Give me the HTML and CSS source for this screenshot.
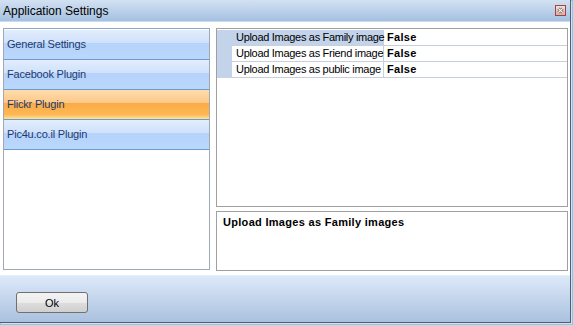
FILE: index.html
```html
<!DOCTYPE html>
<html lang="en">
<head>
    <meta charset="UTF-8">
    <title>Application Settings</title>
    <link rel="stylesheet" href="styles.css">
</head>
<body>
    <div class="window">
        <div class="frame">
            <div class="titlebar">
                <span class="title">Application Settings</span>
                <span class="close-btn">
                    <svg width="11" height="11" viewBox="0 0 11 11">
                        <defs>
                            <linearGradient id="cb" x1="0" y1="0" x2="0" y2="1">
                                <stop offset="0" stop-color="#f4e6e4"/>
                                <stop offset="1" stop-color="#d4aaa4"/>
                            </linearGradient>
                        </defs>
                        <rect x="0.5" y="0.5" width="10" height="10" fill="url(#cb)" stroke="#a3433a"/>
                        <path d="M3.3 3.3 L7.7 7.7 M7.7 3.3 L3.3 7.7" stroke="#6b5a5a" stroke-width="2.6"/>
                        <path d="M3.3 3.3 L7.7 7.7 M7.7 3.3 L3.3 7.7" stroke="#ffffff" stroke-width="1.2"/>
                    </svg>
                </span>
            </div>

            <div class="main">
                <div class="nav">
                    <div class="nav-item">General Settings</div>
                    <div class="nav-item">Facebook Plugin</div>
                    <div class="nav-item active">Flickr Plugin</div>
                    <div class="nav-item">Pic4u.co.il Plugin</div>
                </div>

                <div class="right">
                    <div class="prop-grid">
                        <div class="gutter"></div>
                        <div class="prop-name selected">Upload Images as Family image</div>
                        <div class="prop-value">False</div>

                        <div class="gutter"></div>
                        <div class="prop-name">Upload Images as Friend image</div>
                        <div class="prop-value">False</div>

                        <div class="gutter"></div>
                        <div class="prop-name">Upload Images as public image</div>
                        <div class="prop-value">False</div>
                    </div>
                    <div class="description">Upload Images as Family images</div>
                </div>
            </div>

            <div class="footer">
                <button class="btn">Ok</button>
            </div>
        </div>
    </div>
</body>
</html>
```

FILE: styles.css
```css
* {
    box-sizing: border-box;
}
body {
    margin: 0;
    font-family: "Liberation Sans", Arial, sans-serif;
    font-size: 11px;
    background: #ffffff;
}
.window {
    width: 573px;
    height: 325px;
    padding: 0 2px 2px 0;
    background: #6fd4ee;
}
.frame {
    height: 100%;
    display: flex;
    flex-direction: column;
    background: #ffffff;
    border-right: 1px solid #4f5e74;
    border-bottom: 1px solid #4f5e74;
    box-shadow: 1px 1px 0 #cfe3f3;
}
.titlebar {
    height: 22px;
    flex-shrink: 0;
    display: flex;
    align-items: center;
    justify-content: space-between;
    padding: 0 4px 0 3px;
    background: linear-gradient(#d3e1f2, #bcd1ea 50%, #a5c0e0);
    border-bottom: 1px solid #c9dbef;
}
.title {
    font-size: 12px;
    color: #000000;
    margin-top: 1px;
}
.close-btn {
    display: flex;
    width: 11px;
    height: 11px;
    margin-top: -1px;
}
.main {
    height: 253px;
    flex-shrink: 0;
    display: flex;
    gap: 6px;
    padding: 6px 2px 4px 3px;
}
.nav {
    width: 207px;
    height: 242px;
    border: 1px solid #a0a8b4;
    border-top-color: #8ea6c6;
    padding-top: 1px;
    background: #ffffff;
}
.nav-item {
    height: 30px;
    line-height: 29px;
    padding-left: 3px;
    color: #1d3b70;
    letter-spacing: -0.2px;
    border-bottom: 1px solid #6e9ad3;
    background: linear-gradient(#e2edfd, #cfe1fb 45%, #b5d3fb 46%, #bad7fc);
}
.nav-item.active {
    background: linear-gradient(#fedcab, #fcc889 45%, #fbab45 46%, #fcb855 85%, #fde594);
}
.right {
    width: 352px;
    display: flex;
    flex-direction: column;
    gap: 4px;
}
.prop-grid {
    height: 179px;
    border: 1px solid #a0a0a0;
    display: grid;
    grid-template-columns: 15px 152px 1fr;
    grid-auto-rows: 16px;
    align-content: start;
    padding-top: 1px;
}
.gutter {
    background: #c2d3ea;
}
.prop-name {
    padding-left: 4px;
    line-height: 15px;
    letter-spacing: -0.3px;
    white-space: nowrap;
    border-right: 1px solid #c5cfde;
    border-bottom: 1px solid #c5cfde;
}
.prop-name.selected {
    background: #c2d3ea;
}
.prop-value {
    padding-left: 3px;
    line-height: 15px;
    font-weight: bold;
    letter-spacing: 0.3px;
    border-bottom: 1px solid #c5cfde;
}
.description {
    height: 60px;
    border: 1px solid #a0a0a0;
    padding: 3px 6px;
    line-height: 14px;
    font-weight: bold;
    letter-spacing: 0.3px;
}
.footer {
    flex: 1;
    padding: 16px 0 0 16px;
    background: linear-gradient(#dde9f9, #c3d5ec 50%, #aac1de);
    border-top: 1px solid #e6f0fb;
}
.btn {
    width: 72px;
    height: 21px;
    padding: 0;
    border: 1px solid #707070;
    border-radius: 3px;
    background: linear-gradient(#f3f3f3, #ebebeb 50%, #dddddd 51%, #cfcfcf);
    font-family: "Liberation Sans", Arial, sans-serif;
    font-size: 11px;
    color: #000000;
}
```
